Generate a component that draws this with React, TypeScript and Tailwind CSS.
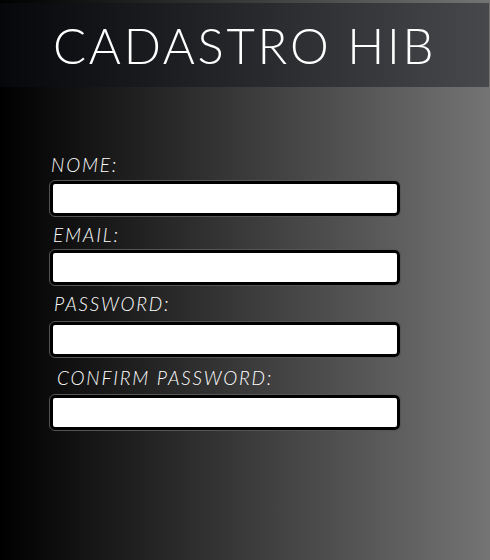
const fields = [
  { label: "NOME:", pad: "pl-[1px]", gap: "mt-0", inGap: "mt-[6px]" },
  { label: "EMAIL:", pad: "pl-[3px]", gap: "mt-[9px]", inGap: "mt-[5px]" },
  { label: "PASSWORD:", pad: "pl-[4px]", gap: "mt-[9px]", inGap: "mt-[8px]" },
  { label: "CONFIRM PASSWORD:", pad: "pl-[7px]", gap: "mt-[11px]", inGap: "mt-[7px]" },
]

const Field = ({ label, pad, gap, inGap }) => (
  <div className={gap}>
    <label className={`block italic font-light tracking-[1.8px] text-white text-[19px] leading-[20px] ${pad}`}>{label}</label>
    <input
      type="text"
      className={`${inGap} block w-[350px] h-[35px] bg-white border-[3px] border-black rounded-[5px] outline outline-1 outline-[#555] outline-offset-0`}
    />
  </div>
)

export default function App() {
  return (
    <div
      className="w-[490px] h-[560px] overflow-hidden bg-[linear-gradient(to_right,#000,#747474)] pt-[3px]"
      style={{ fontFamily: "Lato, 'Open Sans', sans-serif" }}
    >
      <div className="h-[84px] w-[489px] bg-[linear-gradient(to_right,#06070b,#47484c)] flex items-center pl-[53px]">
        <h1 className="text-white text-[49px] leading-none font-light tracking-[2.7px]">CADASTRO HIB</h1>
      </div>
      <form className="pl-[50px] pt-[68px]">
        {fields.map((f) => (
          <Field key={f.label} {...f} />
        ))}
      </form>
    </div>
  )
}
